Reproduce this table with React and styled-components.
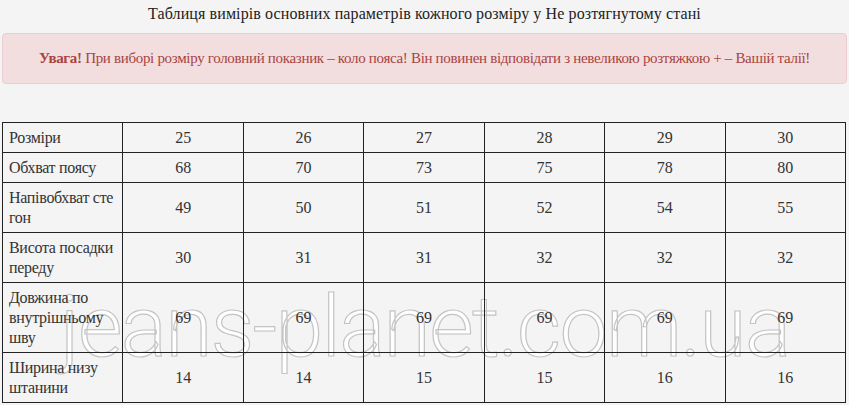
import React from 'react'
import styled, { createGlobalStyle } from 'styled-components'

const GlobalStyle = createGlobalStyle`
  html, body {
    margin: 0;
    padding: 0;
    background: #f4f4f4;
  }
  body {
    font-family: 'Liberation Serif', 'DejaVu Serif', serif;
    font-size: 16px;
    color: #333;
  }
`

const Page = styled.div`
  position: relative;
  padding: 4px 2px 0 2px;
  overflow: hidden;
  height: 405px;
  box-sizing: border-box;
`

const Title = styled.div`
  text-align: center;
  line-height: 20px;
  color: #222;
  letter-spacing: 0.1px;
`

const Alert = styled.div`
  margin-top: 9px;
  padding: 14px 10px 15px;
  line-height: 20px;
  font-size: 15px;
  letter-spacing: -0.32px;
  text-align: center;
  white-space: nowrap;
  color: #a94442;
  background: #f2dede;
  border: 1px solid #ebccd1;
  border-radius: 4px;
  b {
    font-weight: bold;
  }
`

const Table = styled.table`
  position: relative;
  z-index: 1;
  margin-top: 38px;
  width: 844px;
  border-collapse: collapse;
  table-layout: fixed;
`

const Row = styled.tr`
  height: ${props => props.lines * 20 + 10}px;
`

const Cell = styled.td`
  border: 1px solid #222;
  padding: ${props => (props.label ? '0 2px 0 6px' : '0 6px')};
  line-height: 20px;
  vertical-align: middle;
  text-align: ${props => (props.label ? 'left' : 'center')};
  white-space: ${props => (props.label ? 'nowrap' : 'normal')};
  letter-spacing: ${props => (props.label ? '-0.3px' : '0')};
  color: #333;
`

// faint outlined site name sitting behind the table
const Watermark = styled.div`
  position: absolute;
  z-index: 0;
  left: 60px;
  top: 277px;
  font-family: Roboto, 'Liberation Sans', sans-serif;
  font-weight: 300;
  font-size: 86px;
  line-height: 100px;
  letter-spacing: -1.7px;
  color: rgba(255, 255, 255, 0.9);
  -webkit-text-stroke: 1.2px rgba(190, 190, 190, 0.9);
  pointer-events: none;
  white-space: nowrap;
`

const rows = [
  [['Розміри'], [25, 26, 27, 28, 29, 30]],
  [['Обхват поясу'], [68, 70, 73, 75, 78, 80]],
  [['Напівобхват сте', 'гон'], [49, 50, 51, 52, 54, 55]],
  [['Висота посадки', 'переду'], [30, 31, 31, 32, 32, 32]],
  [['Довжина по', 'внутрішньому', 'шву'], [69, 69, 69, 69, 69, 69]],
  [['Ширина низу', 'штанини'], [14, 14, 15, 15, 16, 16]],
]

export default function App () {
  return (
    <Page>
      <GlobalStyle />
      <Title>Таблиця вимірів основних параметрів кожного розміру у Не розтягнутому стані</Title>
      <Alert>
        <b>Увага!</b> При виборі розміру головний показник – коло пояса! Він повинен відповідати з невеликою розтяжкою + – Вашій талії!
      </Alert>
      <Watermark>jeans-planet.com.ua</Watermark>
      <Table>
        <tbody>
          {rows.map(([lines, values]) => (
            <Row key={lines.join(' ')} lines={lines.length}>
              <Cell label>
                {lines.map((l, i) => (
                  <React.Fragment key={i}>
                    {i > 0 && <br />}
                    {l}
                  </React.Fragment>
                ))}
              </Cell>
              {values.map((v, i) => (
                <Cell key={i}>{v}</Cell>
              ))}
            </Row>
          ))}
        </tbody>
      </Table>
    </Page>
  )
}
